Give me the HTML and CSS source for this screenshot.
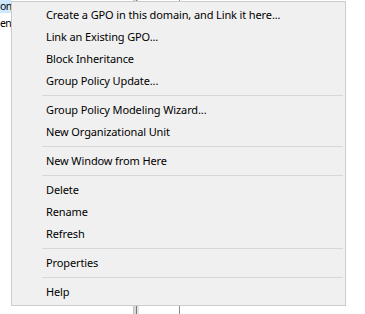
FILE: index.html
```html
<!DOCTYPE html>
<html>
<head>
<meta charset="utf-8">
<title>Context menu</title>
<link rel="stylesheet" href="styles.css">
</head>
<body>
<div class="desk">
	<div class="tree">
		<div class="node sel">on</div>
		<div class="node">en</div>
	</div>
	<div class="splitter"></div>
	<div class="list"><div class="col"></div></div>
</div>

<ul class="menu">
	<li>Create a GPO in this domain, and Link it here...</li>
	<li>Link an Existing GPO...</li>
	<li>Block Inheritance</li>
	<li>Group Policy Update...</li>
	<li class="sep"></li>
	<li>Group Policy Modeling Wizard...</li>
	<li>New Organizational Unit</li>
	<li class="sep"></li>
	<li>New Window from Here</li>
	<li class="sep"></li>
	<li>Delete</li>
	<li>Rename</li>
	<li>Refresh</li>
	<li class="sep"></li>
	<li>Properties</li>
	<li class="sep"></li>
	<li>Help</li>
</ul>
</body>
</html>
```
FILE: styles.css
```css
* {margin:0; padding:0; box-sizing:border-box;}
li {list-style:none;}

body {width:365px; height:314px; overflow:hidden; background:#fff; font:12px "Noto Sans", "Liberation Sans", sans-serif; color:#000; position:relative;}

/* window behind the menu */
.desk {display:flex; height:314px;}
.tree {width:133px; font-size:10.5px; letter-spacing:-0.6px;}
.tree .node {height:20px; line-height:20px; white-space:nowrap;}
.tree .sel {background:#cce8ff; height:13px; line-height:12px; width:11px;}
.splitter {width:6px; border-left:1px solid #c4c4c4; border-right:2px solid #e2e2e2; background:#777; box-shadow:inset 2px 0 0 #d8d8d8;}
.list {flex:1;}
.col {width:41px; height:100%; border-right:1px solid #8a8a8a;}

/* context menu */
.menu {position:absolute; left:11px; top:1px; width:335px; padding:2px; background:#f0f0f0; border:1px solid #cccccc; font-size:11px; letter-spacing:-0.12px;}
.menu li {height:22px; line-height:22px; padding-left:32px; white-space:nowrap;}
.menu li.sep {height:7px; padding:0; margin-left:28px; position:relative;}
.menu li.sep::after {content:""; position:absolute; left:0; right:0; top:3px; border-top:1px solid #d7d7d7;}
```
